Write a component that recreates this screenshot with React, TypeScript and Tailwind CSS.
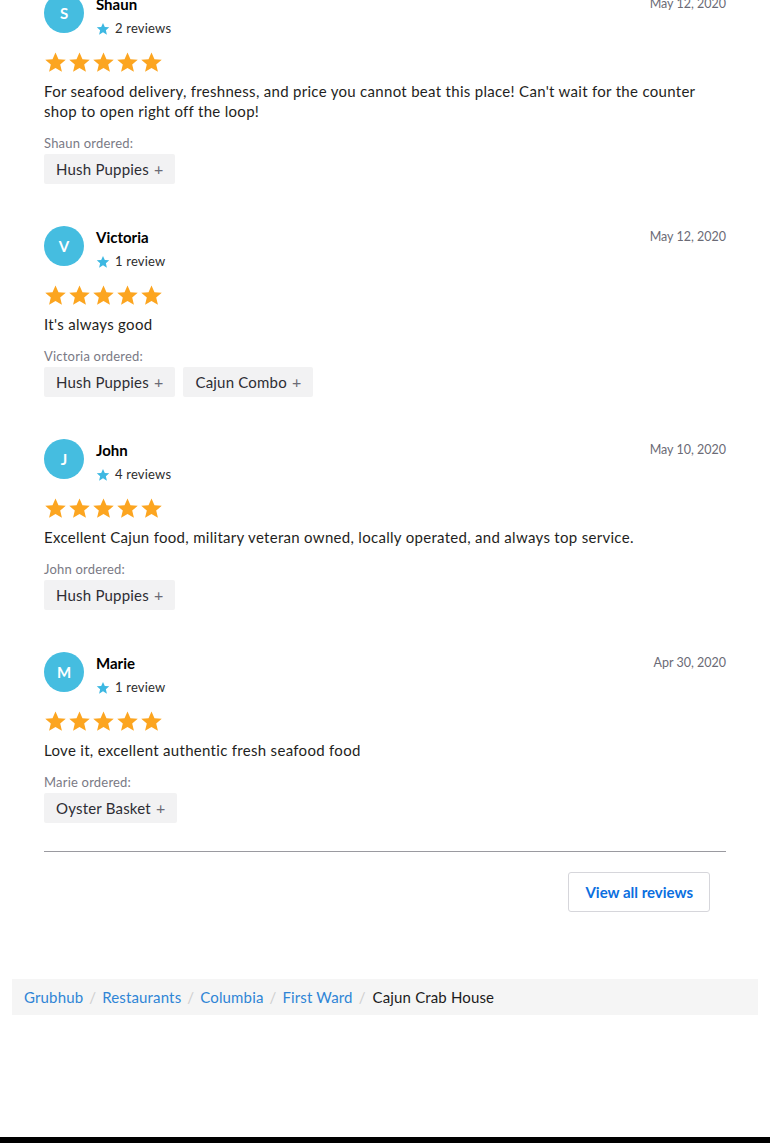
import React from "react";

type Review = {
  name: string;
  initial: string;
  count: string;
  date: string;
  text: string[];
  items: string[];
};

const reviews: Review[] = [
  {
    name: "Shaun",
    initial: "S",
    count: "2 reviews",
    date: "May 12, 2020",
    text: [
      "For seafood delivery, freshness, and price you cannot beat this place! Can't wait for the counter shop to open right off the loop!",
    ],
    items: ["Hush Puppies"],
  },
  {
    name: "Victoria",
    initial: "V",
    count: "1 review",
    date: "May 12, 2020",
    text: ["It's always good"],
    items: ["Hush Puppies", "Cajun Combo"],
  },
  {
    name: "John",
    initial: "J",
    count: "4 reviews",
    date: "May 10, 2020",
    text: ["Excellent Cajun food, military veteran owned, locally operated, and always top service."],
    items: ["Hush Puppies"],
  },
  {
    name: "Marie",
    initial: "M",
    count: "1 review",
    date: "Apr 30, 2020",
    text: ["Love it, excellent authentic fresh seafood food"],
    items: ["Oyster Basket"],
  },
];

const Star = ({ size, color }: { size: number; color: string }) => (
  <svg width={size} height={size} viewBox="0 0 24 24">
    <path
      d="M12 1.5l3.1 7.1 7.6.6-5.8 5 1.8 7.5L12 17.7l-6.7 4 1.8-7.5-5.8-5 7.6-.6z"
      fill={color}
    />
  </svg>
);

function ReviewBlock({ r }: { r: Review }) {
  return (
    <div className="mb-[42px]">
      <div className="flex items-start">
        <div className="w-[40px] h-[40px] rounded-full bg-[#45bde0] text-white flex items-center justify-center text-[15px] font-bold shrink-0">
          {r.initial}
        </div>
        <div className="ml-[12px] flex-1">
          <div className="mt-[1px] text-[15px] leading-[20px] font-bold text-black">{r.name}</div>
          <div className="mt-[5px] flex items-center h-[20px] text-[13px] tracking-[0.2px] text-[#2d2d2d]">
            <Star size={14} color="#3db8e2" />
            <span className="ml-[5px]">{r.count}</span>
          </div>
        </div>
        <div className="mt-[1px] text-[12.5px] leading-[20px] text-[#6b6b76]">{r.date}</div>
      </div>
      <div className="mt-[11px] flex h-[24px] items-center">
        {[0, 1, 2, 3, 4].map((i) => (
          <span key={i} className="w-[24px] flex">
            <Star size={23} color="#fca520" />
          </span>
        ))}
      </div>
      <div className="mt-[7px] text-[15px] leading-[20px] tracking-[0.3px] text-[#1f1f22] pr-[20px]">
        {r.text.join(" ")}
      </div>
      <div className="mt-[13px] text-[13px] leading-[18px] tracking-[0.2px] text-[#7a7a85]">{r.name} ordered:</div>
      <div className="mt-[2px] flex gap-[8px]">
        {r.items.map((it) => (
          <div
            key={it}
            className="h-[30px] px-[12px] bg-[#f2f2f3] rounded-[2px] flex items-center text-[15px] tracking-[0.2px] text-[#2d2d33]"
          >
            {it}
            <span className="ml-[5px] text-[#6b6b76] text-[16px]">+</span>
          </div>
        ))}
      </div>
    </div>
  );
}

export default function App() {
  const crumbs = ["Grubhub", "Restaurants", "Columbia", "First Ward"];
  return (
    <div
      className="w-[770px] h-[1143px] bg-white overflow-hidden flex flex-col"
      style={{ fontFamily: "Lato, 'Liberation Sans', sans-serif" }}
    >
      <div className="px-[44px] mt-[-7px]">
        {reviews.map((r) => (
          <ReviewBlock key={r.name} r={r} />
        ))}
        <div className="mt-[-14px] border-t border-[#9a9aa0]" />
        <div className="mt-[20px] flex justify-end pr-[16px]">
          <button className="h-[40px] px-[16px] border border-[#d6d6db] rounded-[3px] bg-white text-[15px] font-bold text-[#0b6fe0]">
            View all reviews
          </button>
        </div>
      </div>
      <div className="mt-[67px] mx-[12px] h-[36px] bg-[#f5f5f5] flex items-center px-[12px] text-[15px] tracking-[0.15px]">
        {crumbs.map((c) => (
          <React.Fragment key={c}>
            <span className="text-[#2f85d6]">{c}</span>
            <span className="px-[6px] text-[#cfcfcf]">/</span>
          </React.Fragment>
        ))}
        <span className="text-[#1c1c1c] ml-[1px]">Cajun Crab House</span>
      </div>
      <div className="flex-1" />
      <div className="h-[6px] bg-black" />
    </div>
  );
}
